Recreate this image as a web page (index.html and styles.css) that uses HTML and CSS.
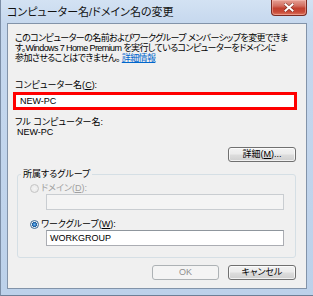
FILE: index.html
```html
<!DOCTYPE html>
<html lang="ja">
<head>
<meta charset="utf-8">
<link rel="stylesheet" href="styles.css">
</head>
<body>
<div class="window">
  <div class="titlebar">
    <span class="title">コンピューター名/ドメイン名の変更</span>
    <div class="close">
      <svg width="10" height="9" viewBox="0 0 10 9"><path d="M1.5 1.5 L8.5 7.5 M8.5 1.5 L1.5 7.5" stroke="#5a1a12" stroke-width="3.4" stroke-linecap="square" opacity="0.55"/><path d="M1.5 1.5 L8.5 7.5 M8.5 1.5 L1.5 7.5" stroke="#ffffff" stroke-width="2" stroke-linecap="square"/></svg>
    </div>
  </div>
  <div class="client">
    <p class="intro">このコンピューターの名前およびワークグループ メンバーシップを変更できま<br>す。Windows 7 Home Premium を実行しているコンピューターをドメインに<br>参加させることはできません。 <a class="link" href="#">詳細情報</a></p>
    <div class="label">コンピューター名(<u>C</u>):</div>
    <div class="name-input">NEW-PC</div>
    <div class="label full">フル コンピューター名:</div>
    <div class="value">NEW-PC</div>
    <div class="row-end"><button class="btn">詳細(<u>M</u>)...</button></div>
    <fieldset class="group">
      <legend>所属するグループ</legend>
      <div class="radio-row disabled"><span class="radio"></span>ドメイン(<u>D</u>):</div>
      <div class="textbox off"></div>
      <div class="radio-row second"><span class="radio checked"></span>ワークグループ(<u>W</u>):</div>
      <div class="textbox">WORKGROUP</div>
    </fieldset>
    <div class="buttons">
      <button class="btn ok" disabled>OK</button>
      <button class="btn cancel">キャンセル</button>
    </div>
  </div>
</div>
</body>
</html>
```

FILE: styles.css
```css
* { box-sizing: border-box; }
html, body { margin: 0; padding: 0; }
body {
  width: 313px;
  height: 296px;
  overflow: hidden;
  font-family: "Liberation Sans", "Noto Sans CJK JP", sans-serif;
  font-size: 9px;
  line-height: 10px;
  color: #000;
  font-feature-settings: "palt";
}
.window {
  width: 313px;
  height: 296px;
  display: flex;
  flex-direction: column;
  background: linear-gradient(180deg, #d3e2f3 0px, #c6d8ee 23px, #bcd1ea 100%);
  border-left: 1px solid #7c8ea6;
  border-bottom: 1px solid #6d7f96;
}
.titlebar {
  height: 23px;
  display: flex;
  align-items: flex-start;
  padding-left: 6px;
  padding-right: 6px;
}
.title {
  font-size: 11px;
  line-height: 24px;
  color: #111;
}
.close {
  margin-left: auto;
  width: 36px;
  height: 16px;
  border: 1px solid #7a2a22;
  border-top: none;
  border-radius: 0 0 4px 4px;
  background: linear-gradient(180deg, #e5a196 0%, #d26d5f 40%, #c2402f 55%, #c94a38 80%, #dd7a62 100%);
  box-shadow: inset 0 0 0 1px rgba(255, 200, 190, 0.45);
  display: flex;
  align-items: center;
  justify-content: center;
}
.client {
  flex: 1;
  margin: 0 6px 6px 6px;
  border: 1px solid #8293a9;
  background: #f0f0f0;
  display: flex;
  flex-direction: column;
  align-items: flex-start;
}
.intro {
  margin: 9px 0 0 7px;
  white-space: nowrap;
  letter-spacing: -0.6px;
}
.link {
  color: #0066cc;
  text-decoration: underline;
}
.label {
  margin: 17px 0 0 7px;
}
.label.full {
  margin-top: 7px;
}
.name-input {
  margin: 2px 0 0 5px;
  width: 284px;
  height: 18px;
  border: 3px solid #ff0000;
  background: #fff;
  padding-left: 4px;
  line-height: 12px;
}
.value {
  margin-left: 9px;
}
.row-end {
  align-self: stretch;
  display: flex;
  justify-content: flex-end;
  padding-right: 10px;
  margin-top: 10px;
}
.btn {
  font: inherit;
  font-size: 9px;
  line-height: 13px;
  height: 15px;
  width: 68px;
  padding: 0;
  margin: 0;
  color: #000;
  border: 1px solid #707070;
  border-radius: 3px;
  background: linear-gradient(180deg, #f2f2f2 0%, #ebebeb 48%, #dddddd 52%, #cfcfcf 100%);
  box-shadow: inset 0 0 0 1px rgba(255, 255, 255, 0.7);
}
.btn:disabled {
  color: #8f8f8f;
  border-color: #adb2b5;
  background: #f4f4f4;
  box-shadow: none;
}
.group {
  margin: 7px 0 0 9px;
  width: 279px;
  padding: 0 0 11px 0;
  border: 1px solid #d5dfe5;
  border-radius: 3px;
  min-width: 0;
}
.group legend {
  margin-left: 3px;
  padding: 0 2px;
  line-height: 10px;
}
.radio-row {
  display: flex;
  align-items: center;
  margin: 4px 0 0 12px;
  height: 10px;
}
.radio-row.second {
  margin-top: 9px;
}
.radio-row.disabled {
  color: #a0a0a0;
}
.radio {
  width: 9px;
  height: 9px;
  margin-right: 2px;
  border-radius: 50%;
  border: 1px solid #c4c4c4;
  background: radial-gradient(circle, #f4f4f4 0%, #e6e6e6 100%);
  display: inline-block;
}
.radio.checked {
  border-color: #3d6b93;
  background: radial-gradient(circle, #6fb3e8 0%, #2c79c2 35%, #1c5a9a 45%, #e9eef3 55%, #dfe6ee 100%);
}
.textbox {
  margin: 1px 0 0 28px;
  width: 238px;
  height: 16px;
  border: 1px solid #abadb3;
  border-top-color: #8f969d;
  background: #fff;
  padding-left: 3px;
  line-height: 14px;
}
.textbox.off {
  background: #f4f4f4;
  border-color: #c9cdd1;
}
.buttons {
  align-self: stretch;
  display: flex;
  justify-content: flex-end;
  gap: 9px;
  padding-right: 10px;
  margin-top: 7px;
}
.btn.ok {
  width: 67px;
}
```
